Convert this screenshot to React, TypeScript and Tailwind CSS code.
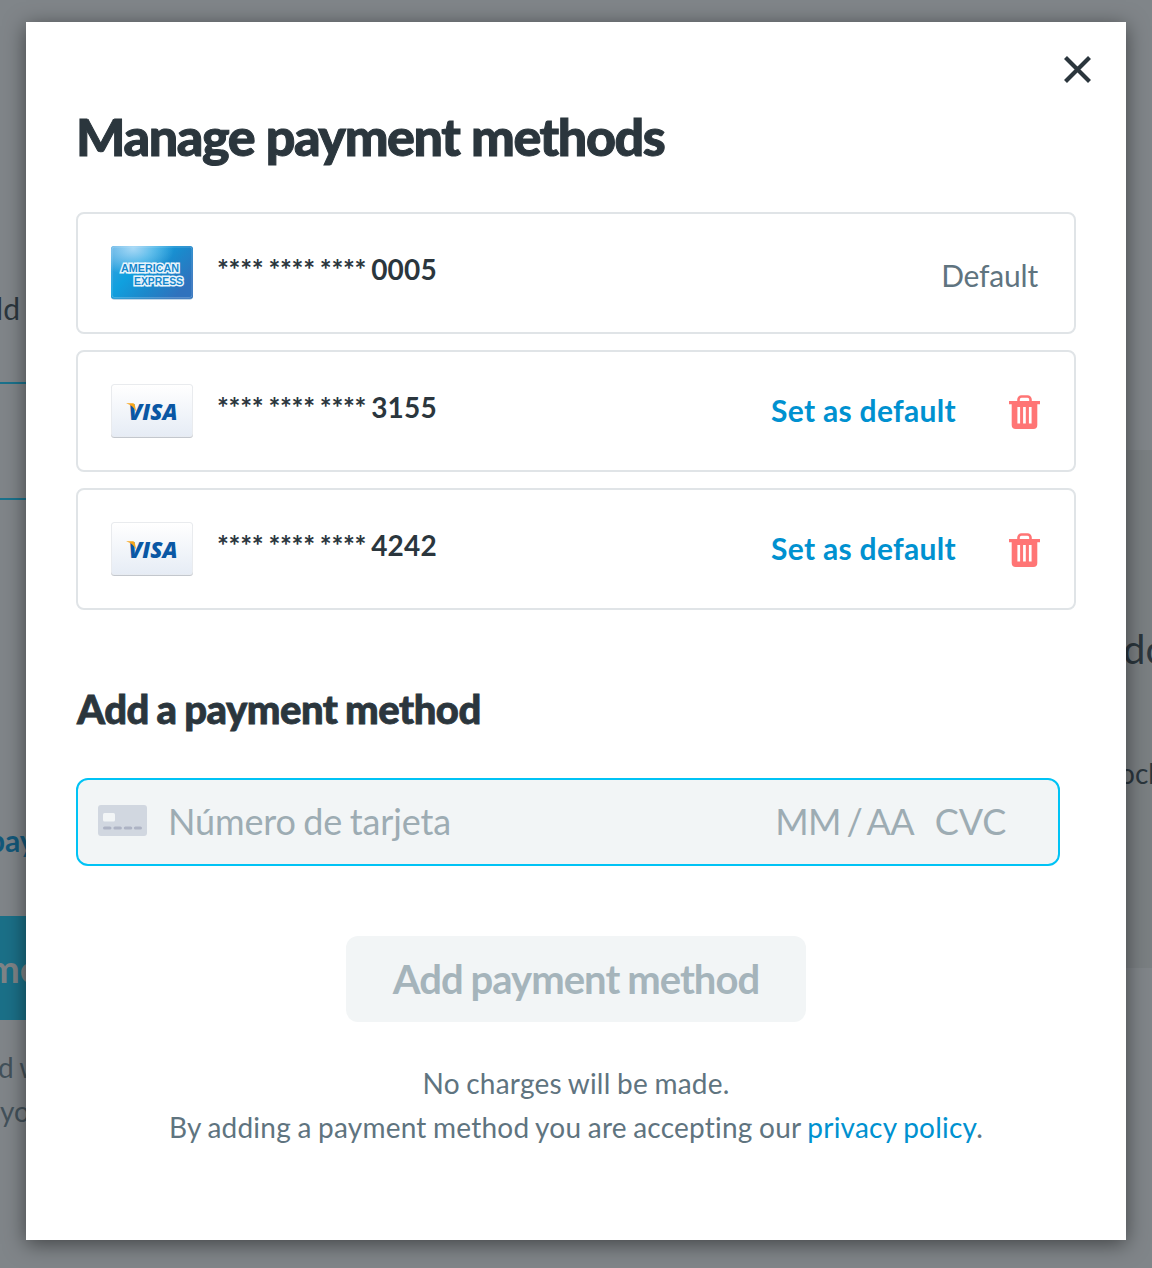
function AmexCard() {
  return (
    <svg width="84" height="56" viewBox="0 0 84 56" className="block">
      <defs>
        <linearGradient id="amexBase" x1="0" y1="0" x2="1" y2="0.6">
          <stop offset="0" stopColor="#3f9fdc" />
          <stop offset="0.4" stopColor="#10a0df" />
          <stop offset="0.7" stopColor="#1c88cb" />
          <stop offset="1" stopColor="#2f72bd" />
        </linearGradient>
        <radialGradient id="amexGlow" cx="0.27" cy="0.05" r="0.5">
          <stop offset="0" stopColor="#a6d8f6" />
          <stop offset="1" stopColor="#a6d8f6" stopOpacity="0" />
        </radialGradient>
      </defs>
      <rect x="1" y="2" width="82" height="52.600" rx="3" fill="#2a6da8" opacity="0.55" />
      <rect x="1" y="1" width="82" height="52.800" rx="3" fill="url(#amexBase)" />
      <rect x="1" y="1" width="82" height="52.800" rx="3" fill="url(#amexGlow)" />
      <rect x="2" y="2" width="80" height="50.500" rx="2.500" fill="none" stroke="#fff" strokeOpacity="0.2" />
      <g fontFamily="Liberation Sans" fontWeight="700" fontSize="11.500" fill="#1687cc" stroke="#e9f5fc" strokeWidth="3.200" strokeLinejoin="miter" strokeMiterlimit="2" paintOrder="stroke">
        <text x="11" y="27" textLength="58" lengthAdjust="spacingAndGlyphs">AMERICAN</text>
        <text x="24" y="39.800" textLength="49" lengthAdjust="spacingAndGlyphs">EXPRESS</text>
      </g>
    </svg>
  );
}

function VisaCard() {
  return (
    <svg width="84" height="56" viewBox="0 0 84 56" className="block">
      <defs>
        <linearGradient id="visaBase" x1="0" y1="0" x2="0" y2="1">
          <stop offset="0" stopColor="#ffffff" />
          <stop offset="1" stopColor="#e6ecf5" />
        </linearGradient>
      </defs>
      <rect x="1" y="2.500" width="82" height="52.500" rx="3.500" fill="#c3c7cd" />
      <rect x="1" y="1" width="82" height="53" rx="3.500" fill="#e9ebee" />
      <rect x="2" y="2" width="80" height="51.500" rx="2.500" fill="url(#visaBase)" />
      <text x="18.500" y="37" fontFamily="Open Sans" fontWeight="800" fontStyle="italic" fontSize="23" fill="#0a57a4" textLength="49" lengthAdjust="spacingAndGlyphs">VISA</text>
      <path d="M16.500 20.300h5.800c1.500 0 2.200.5 2.500 1.800l1.500 6.800c-1.700-3.800-5-7.200-9.800-8.400z" fill="#f9a51a" />
    </svg>
  );
}

function TrashIcon() {
  return (
    <svg width="32" height="36" viewBox="0 0 32 36" className="block">
      <path d="M9.500 7.500V5.500a3 3 0 0 1 3-3h6a3 3 0 0 1 3 3V7.500" fill="none" stroke="#ff7575" strokeWidth="2.600" />
      <path fillRule="evenodd" fill="#ff7575" d="M0 7h31v3.200H28.300V31a4 4 0 0 1-4 4H6.700a4 4 0 0 1-4-4V10.200H0zM8.400 13v16.500h2.700V13zM14.100 13v16.500h2.700V13zM19.900 13v16.500h2.700V13z" />
    </svg>
  );
}

function CloseIcon() {
  return (
    <svg width="28" height="28" viewBox="0 0 28 28" className="block">
      <path d="M1.500 1.500l24 24M25.500 1.500l-24 24" stroke="#2b363d" strokeWidth="4.200" />
    </svg>
  );
}

function CardGlyph() {
  return (
    <svg width="50" height="32" viewBox="0 0 50 32" className="block">
      <rect x="0" y="0" width="49" height="31" rx="3" fill="#d1d7e0" />
      <rect x="5" y="8" width="12" height="8.500" rx="1.500" fill="#f2f5f6" />
      <path d="M6.600 23h5.300M17 23h5.300M27.400 23h5.300M37.500 23h4.900" stroke="#adb3c4" strokeWidth="3.200" strokeLinecap="round" />
    </svg>
  );
}

const cards = [
  { brand: "amex", last4: "0005", isDefault: true },
  { brand: "visa", last4: "3155", isDefault: false },
  { brand: "visa", last4: "4242", isDefault: false },
];

export default function App() {
  return (
    <div className="relative h-[1268px] w-[1152px] overflow-hidden bg-[#808589] font-['Lato',sans-serif] text-[#2b363d]">
      <main className="flex h-full justify-between">
        <div className="flex w-[60px] flex-col">
          <p className="mt-[290px] flex h-9 w-5 justify-end text-[30px] leading-9">ld</p>
          <div className="mt-[56px] h-[118px] border-y-2 border-[#1b728c]" />
          <p className="-ml-3 mt-[322px] h-9 text-[30px] font-bold leading-9 text-[#13587a]">pay</p>
          <div className="mt-[58px] flex h-[104px] items-center bg-[#1b7088] text-[38px] font-bold text-[#7f8487]">
            <span className="-ml-3">me</span>
          </div>
          <p className="-ml-0.5 mt-[25px] h-11 whitespace-nowrap text-[28px] leading-[44px] tracking-[-0.5px] text-[#43515a]">d w</p>
          <p className="h-11 text-[28px] leading-[44px] text-[#43515a]">you</p>
        </div>
        <div className="mt-[450px] flex h-[518px] w-[60px] flex-col bg-[#7a7f82] pl-[31px]">
          <p className="mt-[175px] h-12 text-[40px] leading-[48px]">do</p>
          <p className="-ml-1 mt-[82px] h-9 text-[28px] leading-9">ock</p>
        </div>
      </main>

      <section className="absolute left-[26px] top-[22px] flex h-[1218px] w-[1100px] flex-col bg-white px-[50px] shadow-[0_4px_20px_rgba(0,0,0,0.5)]">
        <div className="-mr-4 flex h-[78px] items-center justify-end pt-[17px]">
          <button aria-label="Close"><CloseIcon /></button>
        </div>
        <h1 className="mt-1 h-16 whitespace-nowrap text-[52px] font-black leading-[64px] tracking-[-1.400px] [-webkit-text-stroke:1px_#2b363d] [word-spacing:0.500px]">Manage payment methods</h1>
        <ul className="mt-11 flex flex-col gap-4">
          {cards.map((c) => (
            <li key={c.last4} className="flex h-[122px] items-center rounded-lg border-2 border-[#e0e4e7] pl-8 pr-[33px]">
              {c.brand === "amex" ? <AmexCard /> : <VisaCard />}
              <span className="mb-2 ml-[23px] flex-1 text-[28px] font-bold leading-9 tracking-[-0.3px] [word-spacing:-1.500px]">
                **** **** **** <span className="tracking-[0.150px]">{c.last4}</span>
              </span>
              {c.isDefault ? (
                <span className="mr-[3px] mt-[3px] text-[30px] leading-[38px] tracking-[-0.2px] text-[#5f747f]">Default</span>
              ) : (
                <>
                  <button className="mb-0.5 text-[30px] font-bold leading-10 tracking-[0.3px] text-[#0091d0]">Set as default</button>
                  <button aria-label="Delete" className="ml-[53px] mt-px"><TrashIcon /></button>
                </>
              )}
            </li>
          ))}
        </ul>
        <h2 className="mt-[75px] h-12 pl-px text-[40px] font-black leading-[48px] tracking-[-0.500px] [-webkit-text-stroke:0.8px_#2b363d] [word-spacing:-1.300px]">Add a payment method</h2>
        <div className="mt-[45px] flex h-[88px] w-[984px] items-center rounded-xl border-2 border-[#00c3f5] bg-[#f2f5f6] pb-[3px] pl-5 text-[36px] text-[#9dacb3]">
          <CardGlyph />
          <span className="ml-5 flex-1 tracking-[-0.150px] [word-spacing:-1.500px]">Número de tarjeta</span>
          <span className="tracking-[-0.700px] [word-spacing:-2.800px]">MM / AA</span>
          <span className="ml-[21px] mr-[52px] tracking-[-0.200px]">CVC</span>
        </div>
        <button className="mt-[70px] h-[86px] w-[460px] self-center rounded-xl bg-[#f2f5f6] text-[40px] font-bold tracking-[-0.950px] text-[#a5b4bb] [word-spacing:-1px]">Add payment method</button>
        <p className="mt-[39px] whitespace-nowrap text-center text-[28px] leading-[44px] tracking-[0.220px] text-[#5f747f] [word-spacing:-0.900px]">
          No charges will be made.<br />
          By adding a payment method you are accepting our <a className="text-[#0091d0]">privacy policy</a>.
        </p>
      </section>
    </div>
  );
}
